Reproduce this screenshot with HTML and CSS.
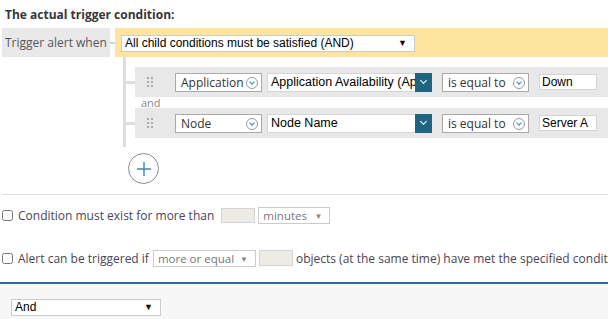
FILE: index.html
```html
<!DOCTYPE html>
<html lang="en">
<head>
  <meta charset="UTF-8">
  <title>Trigger condition</title>
  <link rel="stylesheet" href="styles.css">
</head>
<body>
  <h2 class="section-title">The actual trigger condition:</h2>

  <div class="trigger-row">
    <div class="trigger-label">Trigger alert when</div>
    <div class="connector"></div>
    <div class="trigger-box">
      <div class="plain-select wide">All child conditions must be satisfied (AND)<span class="arrow">&#9660;</span></div>
    </div>
  </div>

  <div class="tree">
    <div class="cond-row">
      <div class="handle"><i></i><i></i><i></i><i></i><i></i><i></i></div>
      <div class="pick">Application<span class="circle-ico"></span></div>
      <div class="field"><span class="field-text">Application Availability (Application)</span><span class="field-btn"></span></div>
      <div class="pick op">is equal to<span class="circle-ico"></span></div>
      <div class="value">Down</div>
    </div>
    <div class="and-label">and</div>
    <div class="cond-row">
      <div class="handle"><i></i><i></i><i></i><i></i><i></i><i></i></div>
      <div class="pick">Node<span class="circle-ico"></span></div>
      <div class="field"><span class="field-text">Node Name</span><span class="field-btn"></span></div>
      <div class="pick op">is equal to<span class="circle-ico"></span></div>
      <div class="value">Server A</div>
    </div>
  </div>

  <div class="add-btn">
    <svg width="18" height="18" viewBox="0 0 18 18"><path d="M9 2v14M2 9h14" stroke="#3489bb" stroke-width="1.4" fill="none"/></svg>
  </div>

  <hr class="sep">

  <div class="opt-row first">
    <input type="checkbox" class="chk">
    <span>Condition must exist for more than</span>
    <span class="num-box small"></span>
    <div class="gray-select minutes">minutes<span class="arrow">&#9660;</span></div>
  </div>

  <div class="opt-row">
    <input type="checkbox" class="chk">
    <span>Alert can be triggered if</span>
    <div class="gray-select more">more or equal<span class="arrow">&#9660;</span></div>
    <span class="num-box"></span>
    <span class="nowrap">objects (at the same time) have met the specified conditions</span>
  </div>

  <div class="footer">
    <div class="plain-select and">And<span class="arrow">&#9660;</span></div>
  </div>
</body>
</html>
```

FILE: styles.css
```css
* {
  box-sizing: border-box;
}

body {
  margin: 0;
  font-family: 'Open Sans', sans-serif;
  font-size: 12px;
  color: #444;
  background: #fff;
  overflow: hidden;
  width: 608px;
  height: 319px;
}

.section-title {
  margin: 0;
  padding: 6px 0 0 5px;
  height: 28px;
  font-size: 12px;
  font-weight: 700;
  color: #363636;
}

/* top row */
.trigger-row {
  display: flex;
  margin-left: 2px;
  height: 29px;
}

.trigger-label {
  width: 108px;
  background: #e9e9e9;
  color: #555;
  padding-left: 3px;
  line-height: 29px;
  font-size: 12px;
}

.connector {
  width: 5px;
  position: relative;
}

.connector::before {
  content: '';
  position: absolute;
  left: 0;
  right: 0;
  top: 14px;
  height: 2px;
  background: #d4d4d4;
}

.trigger-box {
  flex: 1;
  background: #fde59f;
  padding: 7px 6px;
}

.plain-select {
  position: relative;
  height: 17px;
  border: 1px solid #ccc;
  background: #fff;
  font-family: 'Liberation Sans', Arial, sans-serif;
  font-size: 12px;
  color: #000;
  line-height: 15px;
  padding-left: 3px;
}

.plain-select.wide {
  width: 294px;
}

.plain-select .arrow {
  position: absolute;
  right: 7px;
  top: 0;
  font-size: 9px;
  color: #111;
}

/* tree of conditions */
.tree {
  margin-left: 123px;
  border-left: 3px solid #ddd;
  padding: 10px 0 9px 9px;
}

.cond-row {
  position: relative;
  display: flex;
  align-items: center;
  height: 30px;
  background: #e8e8e8;
  padding-left: 12px;
}

.cond-row > * {
  flex-shrink: 0;
}

.cond-row::before {
  content: '';
  position: absolute;
  left: -9px;
  top: 14px;
  width: 9px;
  height: 3px;
  background: #ddd;
}

.handle {
  display: grid;
  grid-template-columns: 2px 2px;
  grid-template-rows: 2px 2px 2px;
  gap: 2px;
  width: 6px;
  margin-right: 22px;
}

.handle i {
  background: #aaa;
}

.pick {
  position: relative;
  width: 87px;
  height: 19px;
  border: 1px solid #aaa;
  background: #fff;
  color: #333;
  font-size: 12px;
  line-height: 17px;
  padding-left: 5px;
}

.pick.op {
  margin-left: 10px;
}

.circle-ico {
  position: absolute;
  right: 3px;
  top: 3px;
  width: 12px;
  height: 12px;
  border: 1px solid #999;
  border-radius: 50%;
}

.circle-ico::after {
  content: '';
  position: absolute;
  left: 3px;
  top: 2px;
  width: 3px;
  height: 3px;
  border-right: 1.3px solid #2a8cc4;
  border-bottom: 1.3px solid #2a8cc4;
  transform: rotate(45deg);
}

.field {
  display: flex;
  margin-left: 5px;
  width: 165px;
  height: 19px;
}

.field-text {
  flex: 1;
  overflow: hidden;
  white-space: nowrap;
  background: #fff;
  border: 1px solid #d6d6d6;
  border-right: none;
  font-family: 'Liberation Sans', Arial, sans-serif;
  font-size: 12.5px;
  color: #000;
  line-height: 17px;
  padding-left: 3px;
}

.field-btn {
  position: relative;
  width: 17px;
  background: #1f6480;
}

.field-btn::after {
  content: '';
  position: absolute;
  left: 6px;
  top: 5px;
  width: 4px;
  height: 4px;
  border-right: 1px solid #fff;
  border-bottom: 1px solid #fff;
  transform: rotate(45deg);
}

.value {
  margin-left: 10px;
  width: 58px;
  height: 16px;
  border: 1px solid #d4d4d4;
  background: #fff;
  font-family: 'Liberation Sans', Arial, sans-serif;
  font-size: 12px;
  color: #000;
  line-height: 14px;
  padding-left: 2px;
}

.and-label {
  height: 11px;
  line-height: 11px;
  padding-left: 6px;
  font-size: 11px;
  color: #888;
}

.add-btn {
  margin: 6px 0 0 128px;
  width: 31px;
  height: 31px;
  border: 1.5px solid #8a8a8a;
  border-radius: 50%;
  display: flex;
  align-items: center;
  justify-content: center;
}

.sep {
  margin: 10px 0 0 2px;
  border: none;
  border-top: 1px solid #dcdcdc;
}

/* options */
.opt-row {
  display: flex;
  align-items: center;
  height: 20px;
  white-space: nowrap;
  color: #4a4458;
}

.opt-row > * {
  flex-shrink: 0;
}

.opt-row.first {
  margin-top: 10px;
}

.opt-row + .opt-row {
  margin-top: 23px;
}

.chk {
  margin: 0 5px 0 2px;
  width: 11px;
  height: 11px;
}

.num-box {
  display: inline-block;
  width: 34px;
  height: 16px;
  border: 1px solid #d4d4d4;
  background: #ecebe6;
  margin: 0 3px;
}

.num-box.small {
  margin-left: 7px;
  height: 15px;
}

.gray-select {
  position: relative;
  height: 17px;
  border: 1px solid #ccc;
  background: #fff;
  color: #777;
  font-size: 11.5px;
  line-height: 15px;
  padding-left: 4px;
}

.gray-select .arrow {
  position: absolute;
  right: 7px;
  top: 0;
  font-size: 8px;
  color: #888;
}

.gray-select.minutes {
  width: 72px;
}

.gray-select.more {
  width: 103px;
  margin-left: 4px;
}

.nowrap {
  white-space: nowrap;
}

.footer {
  margin-top: 14px;
  border-top: 2px solid #2d6ba0;
  background: #f7f7f7;
  height: 40px;
  padding: 15px 0 0 11px;
}

.plain-select.and {
  width: 150px;
}
```
